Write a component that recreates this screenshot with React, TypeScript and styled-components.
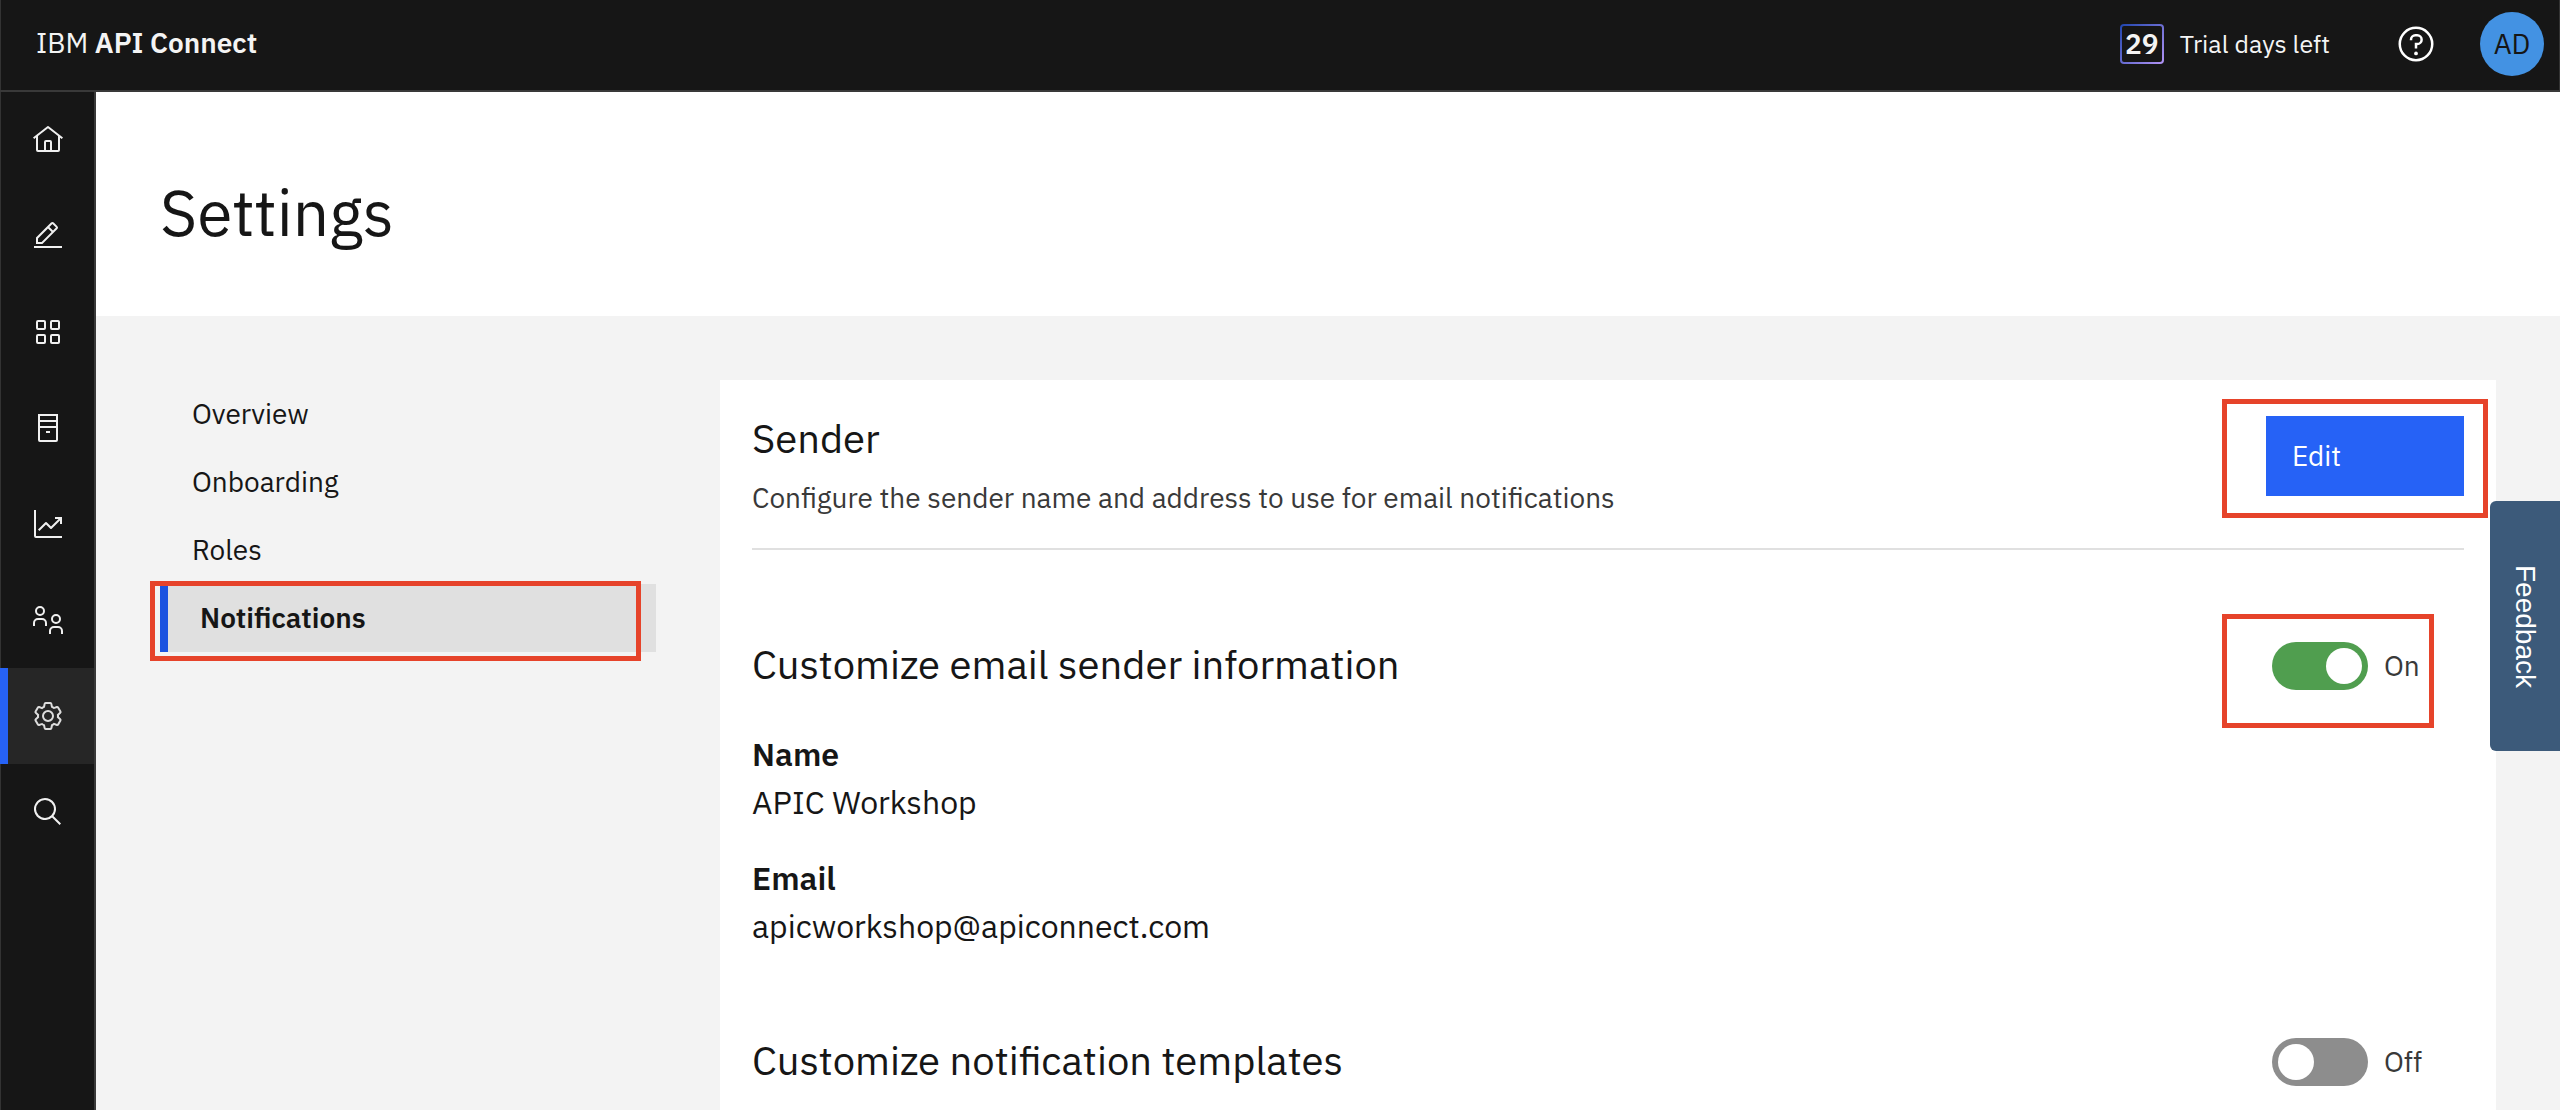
import React, { useState } from "react";
import styled, { createGlobalStyle } from "styled-components";

const GlobalStyle = createGlobalStyle`
  *, *::before, *::after { box-sizing: border-box; }
  body {
    margin: 0;
    background: #f3f3f3;
    color: #161616;
    font-family: "IBM Plex Sans", Roboto, "Liberation Sans", sans-serif;
    font-size: 28px;
    line-height: 36px;
  }
  h1, h2, p, dl, dd, ul { margin: 0; padding: 0; font-weight: 400; }
  ul { list-style: none; }
  button, input { font: inherit; margin: 0; }
`;

const Shell = styled.div`
  display: flex;
  flex-direction: column;
  min-height: 100vh;
`;

/* Header */

const Header = styled.header`
  display: flex;
  align-items: center;
  justify-content: space-between;
  height: 92px;
  padding: 0 16px 2px 36px;
  background: #161616;
  border-bottom: 2px solid #393939;
  box-shadow: inset 1px 0 #333333, inset -1px 0 #333333;
  color: #f4f4f4;
`;

const Brand = styled.a`
  padding-bottom: 2px;
  color: inherit;
  text-decoration: none;

  strong { font-weight: 600; }
`;

const HeaderTools = styled.div`
  display: flex;
  align-items: center;
`;

const Trial = styled.div`
  display: flex;
  align-items: center;
  gap: 16px;
  margin-right: 66px;
  font-size: 25px;
`;

const TrialDays = styled.strong`
  display: flex;
  align-items: center;
  justify-content: center;
  width: 44px;
  height: 40px;
  border: 2px solid transparent;
  border-radius: 4px;
  background:
    linear-gradient(#161616, #161616) padding-box,
    linear-gradient(135deg, #1f45ae, #b394f5) border-box;
  font-size: 28px;
  font-weight: 600;
`;

const HelpButton = styled.button`
  display: flex;
  padding: 0;
  margin-right: 44px;
  border: 0;
  background: none;
  color: #ffffff;
`;

const Avatar = styled.button`
  width: 64px;
  height: 64px;
  padding: 0;
  border: 0;
  border-radius: 50%;
  background: #4392e3;
  color: #161616;
`;

/* Side rail */

const Body = styled.div`
  display: flex;
  flex: 1;
`;

const Rail = styled.nav`
  flex: none;
  width: 96px;
  background: #161616;
  border-right: 2px solid #393939;
  box-shadow: inset 1px 0 #333333;
`;

const RailLink = styled.a<{ $active: boolean }>`
  display: flex;
  align-items: center;
  height: 96px;
  padding-left: ${(p) => (p.$active ? 24 : 32)}px;
  border-left: ${(p) => (p.$active ? "8px solid #2662f6" : "0")};
  background: ${(p) => (p.$active ? "#262626" : "transparent")};
  color: ${(p) => (p.$active ? "#dddddd" : "#f0f0f0")};
`;

/* Page */

const Page = styled.main`
  display: flex;
  flex: 1;
  flex-direction: column;
  min-width: 0;
`;

const TitleBar = styled.div`
  padding: 80px 64px 64px;
  background: #ffffff;
`;

const Title = styled.h1`
  font-size: 64px;
  line-height: 80px;
`;

const Content = styled.div`
  display: grid;
  flex: 1;
  grid-template-columns: 496px minmax(0, 1fr);
  gap: 64px;
  padding: 64px 64px 0;
`;

const MenuItem = styled.li`
  position: relative;
`;

const MenuLink = styled.a<{ $active: boolean }>`
  display: flex;
  align-items: center;
  height: 68px;
  padding-left: 32px;
  border-left: ${(p) => (p.$active ? "8px solid #1c53e0" : "0")};
  background: ${(p) => (p.$active ? "#e0e0e0" : "transparent")};
  color: #161616;
  font-weight: ${(p) => (p.$active ? 600 : 400)};
  text-decoration: none;
`;

const Panel = styled.div`
  padding: 32px 32px 0;
  background: #ffffff;
`;

const PanelHeader = styled.section`
  display: flex;
  align-items: flex-start;
  justify-content: space-between;
  margin-bottom: 88px;
  padding-bottom: 32px;
  border-bottom: 2px solid #e0e0e0;
`;

const Heading = styled.h2`
  font-size: 40px;
  line-height: 52px;
`;

const Description = styled.p`
  margin-top: 16px;
  color: #393939;
`;

const Action = styled.div`
  position: relative;
  margin-top: 4px;
`;

const EditButton = styled.button`
  display: block;
  width: 198px;
  height: 80px;
  padding: 0 26px;
  border: 0;
  background: #2662f6;
  color: #ffffff;
  text-align: left;
`;

const Section = styled.section`
  margin-bottom: 84px;
`;

const SectionRow = styled.div`
  display: flex;
  align-items: flex-start;
  justify-content: space-between;
`;

const SwitchLabel = styled.label`
  display: flex;
  align-items: center;
  gap: 16px;
  width: 192px;
  color: #393939;
`;

const SwitchInput = styled.input`
  appearance: none;
  display: flex;
  flex: none;
  width: 96px;
  height: 48px;
  padding: 6px;
  border-radius: 24px;
  background: #8d8d8d;

  &::before {
    content: "";
    width: 36px;
    height: 36px;
    border-radius: 50%;
    background: #ffffff;
  }
  &:checked {
    justify-content: flex-end;
    background: #509e4f;
  }
`;

const Details = styled.dl`
  display: grid;
  gap: 28px;
  margin-top: 40px;
  font-size: 32px;
  line-height: 48px;

  dt { font-weight: 600; }
`;

/* Overlays */

const Callout = styled.span<{ $inset: string }>`
  position: absolute;
  inset: ${(p) => p.$inset};
  border: 5px solid #e6432a;
  pointer-events: none;
`;

const Feedback = styled.button`
  position: fixed;
  top: 501px;
  right: 0;
  width: 70px;
  height: 250px;
  padding: 0;
  border: 0;
  border-radius: 6px 0 0 6px;
  background: #3c5a7a;
  color: #ffffff;
  font-family: "Liberation Sans", Arial, sans-serif;
  writing-mode: vertical-rl;
`;

const Icon = ({ size = 32, children }: { size?: number; children: React.ReactNode }) => (
  <svg width={size} height={size} viewBox="0 0 32 32" fill="currentColor" aria-hidden="true">
    {children}
  </svg>
);

const railItems = [
  {
    name: "Home",
    icon: (
      <path d="M16.6123,2.2138a1.01,1.01,0,0,0-1.2427,0L1,13.4194l1.2427,1.5717L4,13.6208V26a2.0041,2.0041,0,0,0,2,2H26a2.0037,2.0037,0,0,0,2-2V13.63L29.7573,15,31,13.4282ZM18,26H14V18h4Zm2,0V18a2.0023,2.0023,0,0,0-2-2H14a2.002,2.002,0,0,0-2,2v8H6V12.0615l10-7.79,10,7.8005V26Z" />
    ),
  },
  {
    name: "Develop",
    icon: (
      <path d="M2,26H30V28H2ZM25.4,9a1.98,1.98,0,0,0,0-2.8L21.8,2.6a1.98,1.98,0,0,0-2.8,0L4,17.6V24h6.4ZM20.4,4,24,7.6l-3,3L17.4,7ZM6,22V18.4l10-10L19.6,12l-10,10Z" />
    ),
  },
  {
    name: "Catalogs",
    icon: (
      <path d="M12,4H6A2,2,0,0,0,4,6v6a2,2,0,0,0,2,2h6a2,2,0,0,0,2-2V6A2,2,0,0,0,12,4Zm0,8H6V6h6ZM26,4H20a2,2,0,0,0-2,2v6a2,2,0,0,0,2,2h6a2,2,0,0,0,2-2V6A2,2,0,0,0,26,4Zm0,8H20V6h6ZM12,18H6a2,2,0,0,0-2,2v6a2,2,0,0,0,2,2h6a2,2,0,0,0,2-2V20A2,2,0,0,0,12,18Zm0,8H6V20h6ZM26,18H20a2,2,0,0,0-2,2v6a2,2,0,0,0,2,2h6a2,2,0,0,0,2-2V20A2,2,0,0,0,26,18Zm0,8H20V20h6Z" />
    ),
  },
  {
    name: "Resources",
    icon: (
      <path d="M6,2V28a2,2,0,0,0,2,2H24a2,2,0,0,0,2-2V2ZM24,4V8H8V4ZM24,10v4H8V10ZM8,28V16H24V28ZM14,19h4v2H14Z" />
    ),
  },
  {
    name: "Analytics",
    icon: (
      <path d="M4,2H2V28a2,2,0,0,0,2,2H30V28H4ZM30,9H23v2h3.59L19,18.59l-4.29-4.3a1,1,0,0,0-1.42,0L6,21.59,7.41,23,14,16.41l4.29,4.3a1,1,0,0,0,1.42,0L28,12.41V16h2Z" />
    ),
  },
  {
    name: "Members",
    icon: (
      <path d="M8,4A3,3,0,1,1,5,7,3,3,0,0,1,8,4M8,2a5,5,0,1,0,5,5A5,5,0,0,0,8,2ZM24,12a3,3,0,1,1-3,3,3,3,0,0,1,3-3m0-2a5,5,0,1,0,5,5A5,5,0,0,0,24,10ZM15,22H13V19a3,3,0,0,0-3-3H6a3,3,0,0,0-3,3v3H1V19a5,5,0,0,1,5-5h4a5,5,0,0,1,5,5ZM31,30H29V27a3,3,0,0,0-3-3H22a3,3,0,0,0-3,3v3H17V27a5,5,0,0,1,5-5h4a5,5,0,0,1,5,5Z" />
    ),
  },
  {
    name: "Settings",
    icon: (
      <>
        <path d="M27,16.76c0-.25,0-.5,0-.76s0-.51,0-.77l1.92-1.68A2,2,0,0,0,29.3,11L26.94,7a2,2,0,0,0-1.73-1,2,2,0,0,0-.64.1l-2.43.82a11.35,11.35,0,0,0-1.31-.75l-.51-2.52a2,2,0,0,0-2-1.61H13.64a2,2,0,0,0-2,1.61l-.51,2.52a11.48,11.48,0,0,0-1.32.75L7.43,6.06A2,2,0,0,0,6.79,6,2,2,0,0,0,5.06,7L2.7,11a2,2,0,0,0,.41,2.51L5,15.24c0,.25,0,.5,0,.76s0,.51,0,.77L3.11,18.45A2,2,0,0,0,2.7,21L5.06,25a2,2,0,0,0,1.73,1,2,2,0,0,0,.64-.1l2.43-.82a11.35,11.35,0,0,0,1.31.75l.51,2.52a2,2,0,0,0,2,1.61h4.72a2,2,0,0,0,2-1.61l.51-2.52a11.48,11.48,0,0,0,1.32-.75l2.42.82a2,2,0,0,0,.64.1,2,2,0,0,0,1.73-1L29.3,21a2,2,0,0,0-.41-2.51ZM25.21,24l-3.43-1.16a8.86,8.86,0,0,1-2.71,1.57L18.36,28H13.64l-.71-3.55a9.36,9.36,0,0,1-2.7-1.57L6.79,24,4.43,20l2.72-2.4a8.9,8.9,0,0,1,0-3.13L4.43,12,6.79,8l3.43,1.16a8.86,8.86,0,0,1,2.71-1.57L13.64,4h4.72l.71,3.55a9.36,9.36,0,0,1,2.7,1.57L25.21,8,27.57,12l-2.72,2.4a8.9,8.9,0,0,1,0,3.13L27.57,20Z" />
        <path d="M16,22a6,6,0,1,1,6-6A5.94,5.94,0,0,1,16,22Zm0-10a3.91,3.91,0,0,0-4,4,3.91,3.91,0,0,0,4,4,3.91,3.91,0,0,0,4-4A3.91,3.91,0,0,0,16,12Z" />
      </>
    ),
  },
  {
    name: "Search",
    icon: (
      <path d="M29,27.5859l-7.5521-7.5521a11.0177,11.0177,0,1,0-1.4141,1.4141L27.5859,29ZM4,13a9,9,0,1,1,9,9A9.01,9.01,0,0,1,4,13Z" />
    ),
  },
];

const menuItems = ["Overview", "Onboarding", "Roles", "Notifications"];

function Switch({ labelledBy, initial }: { labelledBy: string; initial: boolean }) {
  const [on, setOn] = useState(initial);
  return (
    <SwitchLabel>
      <SwitchInput
        type="checkbox"
        role="switch"
        aria-labelledby={labelledBy}
        checked={on}
        onChange={(e) => setOn(e.target.checked)}
      />
      {on ? "On" : "Off"}
    </SwitchLabel>
  );
}

export default function App() {
  return (
    <Shell>
      <GlobalStyle />
      <Header>
        <Brand href="#">
          IBM <strong>API Connect</strong>
        </Brand>
        <HeaderTools>
          <Trial>
            <TrialDays>29</TrialDays>
            Trial days left
          </Trial>
          <HelpButton type="button" aria-label="Help">
            <Icon size={40}>
              <path d="M16,2A14,14,0,1,0,30,16,14,14,0,0,0,16,2Zm0,26A12,12,0,1,1,28,16,12,12,0,0,1,16,28Z" />
              <circle cx="16" cy="23.5" r="1.5" />
              <path d="M17,8H15.5A4.49,4.49,0,0,0,11,12.5V13h2v-.5A2.5,2.5,0,0,1,15.5,10H17a2.5,2.5,0,0,1,0,5H15v4.5h2V17a4.5,4.5,0,0,0,0-9Z" />
            </Icon>
          </HelpButton>
          <Avatar type="button">AD</Avatar>
        </HeaderTools>
      </Header>
      <Body>
        <Rail aria-label="Main">
          {railItems.map(({ name, icon }) => (
            <RailLink key={name} href="#" aria-label={name} $active={name === "Settings"}>
              <Icon>{icon}</Icon>
            </RailLink>
          ))}
        </Rail>
        <Page>
          <TitleBar>
            <Title>Settings</Title>
          </TitleBar>
          <Content>
            <nav aria-label="Settings">
              <ul>
                {menuItems.map((item) => {
                  const active = item === "Notifications";
                  return (
                    <MenuItem key={item}>
                      <MenuLink href="#" $active={active}>
                        {item}
                      </MenuLink>
                      {active && <Callout $inset="-3px 15px -9px -10px" />}
                    </MenuItem>
                  );
                })}
              </ul>
            </nav>
            <Panel>
              <PanelHeader>
                <div>
                  <Heading>Sender</Heading>
                  <Description>
                    Configure the sender name and address to use for email notifications
                  </Description>
                </div>
                <Action>
                  <EditButton type="button">Edit</EditButton>
                  <Callout $inset="-17px -24px -22px -44px" />
                </Action>
              </PanelHeader>
              <Section>
                <SectionRow>
                  <Heading id="sender-info">Customize email sender information</Heading>
                  <Action>
                    <Switch labelledBy="sender-info" initial />
                    <Callout $inset="-28px 30px -38px -50px" />
                  </Action>
                </SectionRow>
                <Details>
                  <div>
                    <dt>Name</dt>
                    <dd>APIC Workshop</dd>
                  </div>
                  <div>
                    <dt>Email</dt>
                    <dd>apicworkshop@apiconnect.com</dd>
                  </div>
                </Details>
              </Section>
              <SectionRow>
                <Heading id="templates">Customize notification templates</Heading>
                <Action>
                  <Switch labelledBy="templates" initial={false} />
                </Action>
              </SectionRow>
            </Panel>
          </Content>
        </Page>
      </Body>
      <Feedback type="button">Feedback</Feedback>
    </Shell>
  );
}
